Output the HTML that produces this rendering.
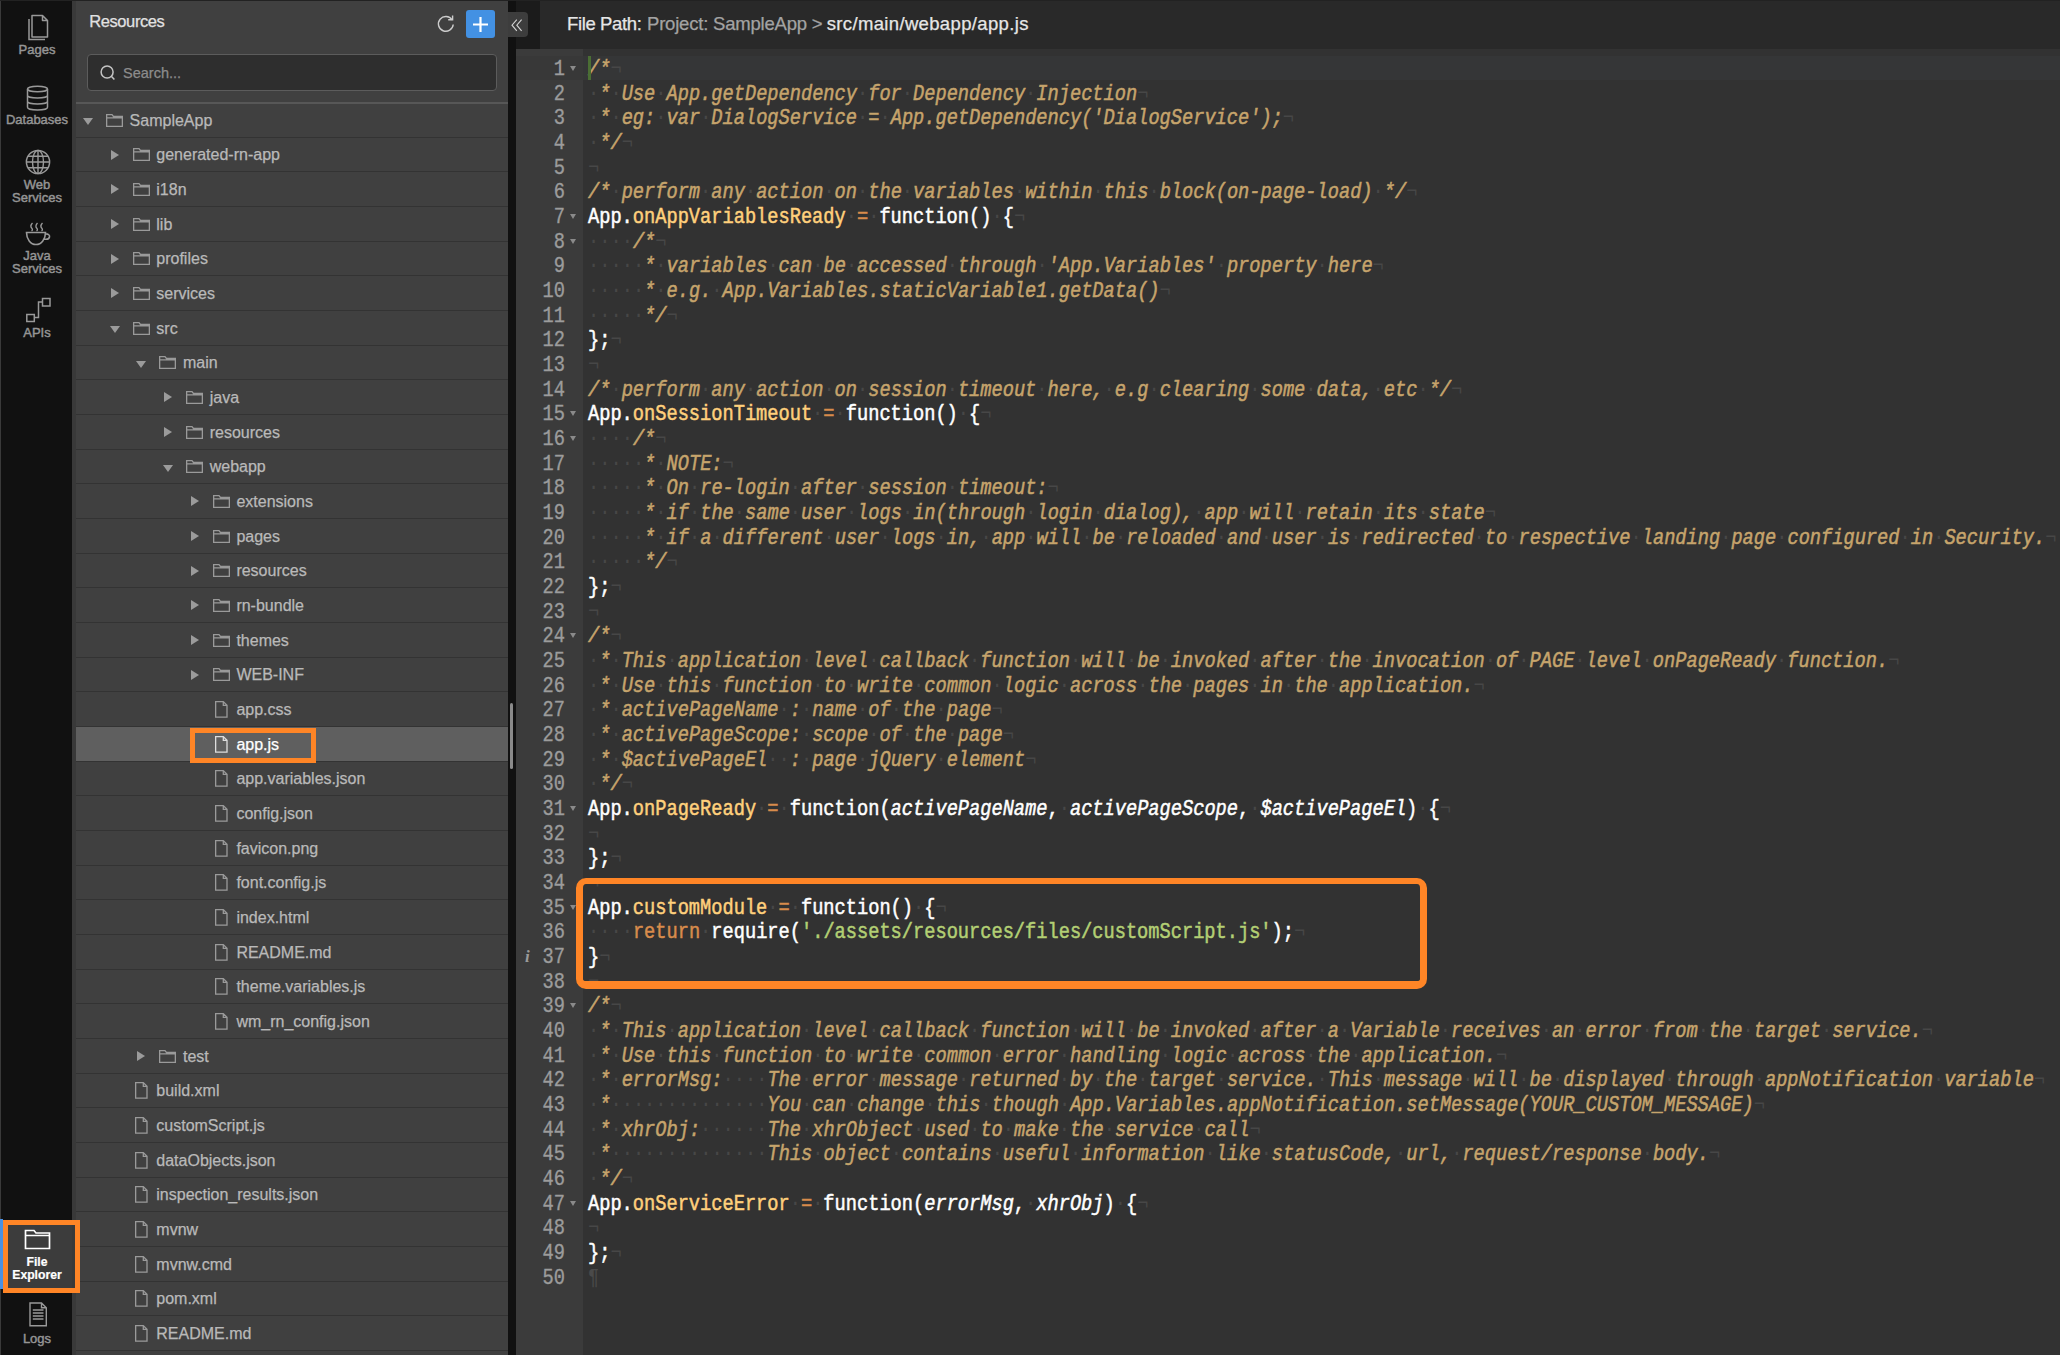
<!DOCTYPE html>
<html><head><meta charset="utf-8">
<style>
*{box-sizing:border-box}
html,body{margin:0;padding:0;width:2060px;height:1355px;overflow:hidden;background:#111;font-family:"Liberation Sans",sans-serif}
.abs{position:absolute}
#topline{position:absolute;left:0;top:0;width:2060px;height:1px;background:#222}
#side{position:absolute;left:0;top:0;width:72px;height:1355px;background:#111;border-left:1px solid #3a3a3a}
#strip{position:absolute;left:72px;top:0;width:4px;height:1355px;background:#393939}
.sb{position:absolute;left:0;width:72px;text-align:center;color:#959595;font-size:13px;line-height:13px;-webkit-text-stroke:0.45px currentColor}
.sb.act{font-weight:bold;font-size:12.2px;-webkit-text-stroke:0.2px currentColor}
#panel{position:absolute;left:76px;top:0;width:432px;height:1355px;background:#404040}
#title{position:absolute;left:13.2px;top:11.7px;font-size:16.5px;letter-spacing:-0.4px;color:#e2e2e2;-webkit-text-stroke:0.25px currentColor}
#search{position:absolute;left:11px;top:54px;width:410px;height:37px;border:1.5px solid #5c5c5c;border-radius:4px;background:#2e2e2e}
#search span{position:absolute;left:35px;top:10px;font-size:14.5px;color:#8c8c8c;-webkit-text-stroke:0.25px currentColor}
#sep{position:absolute;left:0;top:102px;width:432px;height:1.5px;background:#575757}
.row{position:absolute;left:0;width:432px;height:34.667px;border-bottom:1.5px solid #333}
.row.sel{background:#5f5f5f}
.tx{position:absolute;top:7.8px;font-size:16px;color:#b9b9b9;white-space:pre;line-height:20px;-webkit-text-stroke:0.25px currentColor}
.sel .tx{color:#fff}
.ico{position:absolute;color:#9a9a9a;line-height:0}
.sel .ico{color:#ddd}
.tdn{position:absolute;top:15px;width:0;height:0;border-left:5.3px solid transparent;border-right:5.3px solid transparent;border-top:7px solid #9b9b9b}
.trt{position:absolute;top:12px;width:0;height:0;border-top:5px solid transparent;border-bottom:5px solid transparent;border-left:8.5px solid #9b9b9b}
#scrl{position:absolute;left:508px;top:49px;width:8px;height:1306px;background:#111}
#thumb{position:absolute;left:510px;top:703px;width:3px;height:66px;background:#8a8a8a;border-radius:2px}
#hdrdark{position:absolute;left:508px;top:1px;width:32px;height:48px;background:#1b1b1b}
#hdrdark2{position:absolute;left:508px;top:1px;width:8px;height:48px;background:#111}
#hdr{position:absolute;left:540px;top:1px;width:1520px;height:48px;background:#292929}
.pth{position:absolute;top:12.3px;font-size:18.5px;color:#e6e6e6;white-space:pre;-webkit-text-stroke:0.25px currentColor}
.pth.g{color:#a3a3a3}
#collapse{position:absolute;left:508px;top:12px;width:20px;height:25px;background:#3d3d3d;border-radius:0 4px 4px 0}
#gutter{position:absolute;left:516px;top:49px;width:67px;height:1306px;background:#3b3b3b;color:#999}
#codebg{position:absolute;left:583px;top:49px;width:1477px;height:1306px;background:#323232}
#active{position:absolute;left:583px;top:55.5px;width:1477px;height:24.667px;background:#353637}
#gactive{position:absolute;left:516px;top:55.5px;width:67px;height:24.667px;background:#383838}
.ln{position:absolute;left:588px;transform:scaleY(1.18);transform-origin:0 6.67px;height:24.667px;line-height:24.667px;font-family:"Liberation Mono",monospace;font-size:18.684px;white-space:pre;color:#fff;-webkit-text-stroke:0.45px currentColor}
.gn{position:absolute;left:516px;width:49px;transform:scaleY(1.18);transform-origin:0 6.67px;text-align:right;height:24.667px;line-height:24.667px;font-family:"Liberation Mono",monospace;font-size:18.684px;color:#9c9c9c;-webkit-text-stroke:0.3px currentColor}
.fw{position:absolute;left:570px;width:0;height:0;border-left:3.5px solid transparent;border-right:3.5px solid transparent;border-top:5px solid #8a8a8a}
.ln b{font-weight:normal;font-style:normal;color:#474747;-webkit-text-stroke:0}
.ln .c{color:#C6A46C;font-style:italic}
.ln .k{color:#D88C4C}
.ln .f{color:#FFD07C}
.ln .st{color:#B3CF74}
.ln .p{font-style:italic}
.ln .pil{color:#4a4a4a}
#cursor{position:absolute;left:588px;top:55.5px;width:2.5px;height:24.667px;background:#4b6e34}
.obox{position:absolute;border-style:solid;border-color:#ff8526;border-width:6.5px 7px 8.5px 7px;border-radius:10px}
</style></head><body>
<div id="side">
  <svg class="abs" style="left:25.5px;top:14px" width="24" height="28" viewBox="0 0 24 28"><path d="M5 1.5H15.5L20.5 6.5V23H5Z M15.5 1.5V6.5H20.5" fill="none" stroke="#999" stroke-width="1.5" stroke-linejoin="round"/><path d="M2 5V25.5H18" fill="none" stroke="#999" stroke-width="1.5"/></svg>
  <div class="sb" style="top:42.5px">Pages</div>
  <svg class="abs" style="left:24.5px;top:85px" width="23" height="27" viewBox="0 0 23 27"><ellipse cx="11.5" cy="4" rx="10" ry="2.8" fill="none" stroke="#999" stroke-width="1.5"/><path d="M1.5 4V22.3C1.5 23.9 6 25.1 11.5 25.1C17 25.1 21.5 23.9 21.5 22.3V4 M1.5 10.3C1.5 11.9 6 13.1 11.5 13.1C17 13.1 21.5 11.9 21.5 10.3 M1.5 16.3C1.5 17.9 6 19.1 11.5 19.1C17 19.1 21.5 17.9 21.5 16.3" fill="none" stroke="#999" stroke-width="1.5"/></svg>
  <div class="sb" style="top:113px">Databases</div>
  <svg class="abs" style="left:23.7px;top:149px" width="26" height="26" viewBox="0 0 26 26"><circle cx="13" cy="13" r="11.6" fill="none" stroke="#999" stroke-width="1.5"/><ellipse cx="13" cy="13" rx="5.5" ry="11.6" fill="none" stroke="#999" stroke-width="1.4"/><path d="M13 1.4V24.6 M1.4 13H24.6 M3 7.2H23 M3 18.8H23" fill="none" stroke="#999" stroke-width="1.4"/></svg>
  <div class="sb" style="top:177.5px">Web<br>Services</div>
  <svg class="abs" style="left:23.5px;top:221.5px" width="26" height="24" viewBox="0 0 26 24"><path d="M7.5 1C5.5 3 5.5 5 7 6.5C7.8 7.3 7.3 8.5 6.5 9 M12.5 1C10.5 3 10.5 5 12 6.5C12.8 7.3 12.3 8.5 11.5 9 M17.5 1C15.5 3 15.5 5 17 6.5C17.8 7.3 17.3 8.5 16.5 9" fill="none" stroke="#999" stroke-width="1.4"/><path d="M1.5 10.5H20.5C20.5 17 16.5 22.5 11 22.5C5.5 22.5 1.5 17 1.5 10.5Z M20 12C23.5 11.5 25 13.5 24.5 15C24 17 21.5 17.5 19 17" fill="none" stroke="#999" stroke-width="1.6"/></svg>
  <div class="sb" style="top:248.5px">Java<br>Services</div>
  <svg class="abs" style="left:23.5px;top:297px" width="27" height="26" viewBox="0 0 27 26"><rect x="17.5" y="1.5" width="7.5" height="7.5" fill="none" stroke="#999" stroke-width="1.5"/><rect x="1.8" y="17.5" width="7.5" height="7" fill="none" stroke="#999" stroke-width="1.5"/><path d="M9.3 20.5H13.5V5H17.5" fill="none" stroke="#999" stroke-width="1.5"/></svg>
  <div class="sb" style="top:325.5px">APIs</div>
  <div class="abs" style="left:-1px;top:1219px;width:3px;height:70px;background:#4a90e2"></div>
  <div class="abs" style="left:7px;top:1222px;width:64px;height:68px;background:#3c3c3c"></div>
  <svg class="abs" style="left:23px;top:1229px" width="27" height="21" viewBox="0 0 27 21"><path d="M1.5 19.5V1.5H10L12 4H25.5V19.5Z M1.5 6.5H25.5" fill="none" stroke="#fff" stroke-width="1.7"/></svg>
  <div class="sb act" style="top:1255.5px;color:#fff">File<br>Explorer</div>
  <svg class="abs" style="left:27.7px;top:1301.5px" width="19" height="25" viewBox="0 0 19 25"><path d="M1 1H12.5L17.3 5.8V23.8H1Z M12.5 1V5.8H17.3 M3.8 8H14.5 M3.8 11H14.5 M3.8 14H14.5 M3.8 17H14.5" fill="none" stroke="#999" stroke-width="1.4"/></svg>
  <div class="sb" style="top:1332px">Logs</div>
</div>
<div id="strip"></div>
<div id="panel">
  <div id="title">Resources</div>
  <svg class="abs" style="left:360px;top:14px" width="20" height="19" viewBox="0 0 20 19"><path d="M16 5.8A7.4 7.4 0 1 0 17.2 10.5" fill="none" stroke="#ccc" stroke-width="1.4"/><path d="M12.2 5.8H16.6V1.4" fill="none" stroke="#ccc" stroke-width="1.4"/></svg>
  <div class="abs" style="left:390px;top:10px;width:29px;height:28px;background:#4391e3;border-radius:3px"></div>
  <svg class="abs" style="left:390px;top:10px" width="29" height="28" viewBox="0 0 29 28"><path d="M14.5 7V22 M7 14.5H22" stroke="#fff" stroke-width="2.2"/></svg>
  <div id="search"><svg class="abs" style="left:11px;top:9px" width="18" height="18" viewBox="0 0 18 18"><circle cx="8.1" cy="8" r="6" fill="none" stroke="#c4c4c4" stroke-width="1.5"/><path d="M12.3 12.3L15.4 15.6" stroke="#c4c4c4" stroke-width="1.5"/></svg><span>Search...</span></div>
  <div id="sep"></div>
<div class="row" style="top:103.000px"><div class="tdn" style="left:7.00px"></div><div class="ico" style="left:30.00px;top:10.8px"><svg class="fo" width="17" height="13" viewBox="0 0 17 13"><path d="M0.65 12.35V0.65H6L7.5 2.5H16.35V12.35Z M0.65 3.9H16.35" fill="none" stroke="currentColor" stroke-width="1.3"/></svg></div><div class="tx" style="left:53.60px">SampleApp</div></div>
<div class="row" style="top:137.667px"><div class="trt" style="left:34.70px"></div><div class="ico" style="left:56.70px;top:10.8px"><svg class="fo" width="17" height="13" viewBox="0 0 17 13"><path d="M0.65 12.35V0.65H6L7.5 2.5H16.35V12.35Z M0.65 3.9H16.35" fill="none" stroke="currentColor" stroke-width="1.3"/></svg></div><div class="tx" style="left:80.30px">generated-rn-app</div></div>
<div class="row" style="top:172.334px"><div class="trt" style="left:34.70px"></div><div class="ico" style="left:56.70px;top:10.8px"><svg class="fo" width="17" height="13" viewBox="0 0 17 13"><path d="M0.65 12.35V0.65H6L7.5 2.5H16.35V12.35Z M0.65 3.9H16.35" fill="none" stroke="currentColor" stroke-width="1.3"/></svg></div><div class="tx" style="left:80.30px">i18n</div></div>
<div class="row" style="top:207.001px"><div class="trt" style="left:34.70px"></div><div class="ico" style="left:56.70px;top:10.8px"><svg class="fo" width="17" height="13" viewBox="0 0 17 13"><path d="M0.65 12.35V0.65H6L7.5 2.5H16.35V12.35Z M0.65 3.9H16.35" fill="none" stroke="currentColor" stroke-width="1.3"/></svg></div><div class="tx" style="left:80.30px">lib</div></div>
<div class="row" style="top:241.668px"><div class="trt" style="left:34.70px"></div><div class="ico" style="left:56.70px;top:10.8px"><svg class="fo" width="17" height="13" viewBox="0 0 17 13"><path d="M0.65 12.35V0.65H6L7.5 2.5H16.35V12.35Z M0.65 3.9H16.35" fill="none" stroke="currentColor" stroke-width="1.3"/></svg></div><div class="tx" style="left:80.30px">profiles</div></div>
<div class="row" style="top:276.335px"><div class="trt" style="left:34.70px"></div><div class="ico" style="left:56.70px;top:10.8px"><svg class="fo" width="17" height="13" viewBox="0 0 17 13"><path d="M0.65 12.35V0.65H6L7.5 2.5H16.35V12.35Z M0.65 3.9H16.35" fill="none" stroke="currentColor" stroke-width="1.3"/></svg></div><div class="tx" style="left:80.30px">services</div></div>
<div class="row" style="top:311.002px"><div class="tdn" style="left:33.70px"></div><div class="ico" style="left:56.70px;top:10.8px"><svg class="fo" width="17" height="13" viewBox="0 0 17 13"><path d="M0.65 12.35V0.65H6L7.5 2.5H16.35V12.35Z M0.65 3.9H16.35" fill="none" stroke="currentColor" stroke-width="1.3"/></svg></div><div class="tx" style="left:80.30px">src</div></div>
<div class="row" style="top:345.669px"><div class="tdn" style="left:60.40px"></div><div class="ico" style="left:83.40px;top:10.8px"><svg class="fo" width="17" height="13" viewBox="0 0 17 13"><path d="M0.65 12.35V0.65H6L7.5 2.5H16.35V12.35Z M0.65 3.9H16.35" fill="none" stroke="currentColor" stroke-width="1.3"/></svg></div><div class="tx" style="left:107.00px">main</div></div>
<div class="row" style="top:380.336px"><div class="trt" style="left:88.10px"></div><div class="ico" style="left:110.10px;top:10.8px"><svg class="fo" width="17" height="13" viewBox="0 0 17 13"><path d="M0.65 12.35V0.65H6L7.5 2.5H16.35V12.35Z M0.65 3.9H16.35" fill="none" stroke="currentColor" stroke-width="1.3"/></svg></div><div class="tx" style="left:133.70px">java</div></div>
<div class="row" style="top:415.003px"><div class="trt" style="left:88.10px"></div><div class="ico" style="left:110.10px;top:10.8px"><svg class="fo" width="17" height="13" viewBox="0 0 17 13"><path d="M0.65 12.35V0.65H6L7.5 2.5H16.35V12.35Z M0.65 3.9H16.35" fill="none" stroke="currentColor" stroke-width="1.3"/></svg></div><div class="tx" style="left:133.70px">resources</div></div>
<div class="row" style="top:449.670px"><div class="tdn" style="left:87.10px"></div><div class="ico" style="left:110.10px;top:10.8px"><svg class="fo" width="17" height="13" viewBox="0 0 17 13"><path d="M0.65 12.35V0.65H6L7.5 2.5H16.35V12.35Z M0.65 3.9H16.35" fill="none" stroke="currentColor" stroke-width="1.3"/></svg></div><div class="tx" style="left:133.70px">webapp</div></div>
<div class="row" style="top:484.337px"><div class="trt" style="left:114.80px"></div><div class="ico" style="left:136.80px;top:10.8px"><svg class="fo" width="17" height="13" viewBox="0 0 17 13"><path d="M0.65 12.35V0.65H6L7.5 2.5H16.35V12.35Z M0.65 3.9H16.35" fill="none" stroke="currentColor" stroke-width="1.3"/></svg></div><div class="tx" style="left:160.40px">extensions</div></div>
<div class="row" style="top:519.004px"><div class="trt" style="left:114.80px"></div><div class="ico" style="left:136.80px;top:10.8px"><svg class="fo" width="17" height="13" viewBox="0 0 17 13"><path d="M0.65 12.35V0.65H6L7.5 2.5H16.35V12.35Z M0.65 3.9H16.35" fill="none" stroke="currentColor" stroke-width="1.3"/></svg></div><div class="tx" style="left:160.40px">pages</div></div>
<div class="row" style="top:553.671px"><div class="trt" style="left:114.80px"></div><div class="ico" style="left:136.80px;top:10.8px"><svg class="fo" width="17" height="13" viewBox="0 0 17 13"><path d="M0.65 12.35V0.65H6L7.5 2.5H16.35V12.35Z M0.65 3.9H16.35" fill="none" stroke="currentColor" stroke-width="1.3"/></svg></div><div class="tx" style="left:160.40px">resources</div></div>
<div class="row" style="top:588.338px"><div class="trt" style="left:114.80px"></div><div class="ico" style="left:136.80px;top:10.8px"><svg class="fo" width="17" height="13" viewBox="0 0 17 13"><path d="M0.65 12.35V0.65H6L7.5 2.5H16.35V12.35Z M0.65 3.9H16.35" fill="none" stroke="currentColor" stroke-width="1.3"/></svg></div><div class="tx" style="left:160.40px">rn-bundle</div></div>
<div class="row" style="top:623.005px"><div class="trt" style="left:114.80px"></div><div class="ico" style="left:136.80px;top:10.8px"><svg class="fo" width="17" height="13" viewBox="0 0 17 13"><path d="M0.65 12.35V0.65H6L7.5 2.5H16.35V12.35Z M0.65 3.9H16.35" fill="none" stroke="currentColor" stroke-width="1.3"/></svg></div><div class="tx" style="left:160.40px">themes</div></div>
<div class="row" style="top:657.672px"><div class="trt" style="left:114.80px"></div><div class="ico" style="left:136.80px;top:10.8px"><svg class="fo" width="17" height="13" viewBox="0 0 17 13"><path d="M0.65 12.35V0.65H6L7.5 2.5H16.35V12.35Z M0.65 3.9H16.35" fill="none" stroke="currentColor" stroke-width="1.3"/></svg></div><div class="tx" style="left:160.40px">WEB-INF</div></div>
<div class="row" style="top:692.339px"><div class="ico" style="left:139.40px;top:8.6px"><svg class="fi" width="13" height="17" viewBox="0 0 13 17"><path d="M0.65 0.65H8.3L12 4.35V16.1H0.65Z M8.3 0.65V4.35H12" fill="none" stroke="currentColor" stroke-width="1.3"/></svg></div><div class="tx" style="left:160.40px">app.css</div></div>
<div class="row sel" style="top:727.006px"><div class="ico" style="left:139.40px;top:8.6px"><svg class="fi" width="13" height="17" viewBox="0 0 13 17"><path d="M0.65 0.65H8.3L12 4.35V16.1H0.65Z M8.3 0.65V4.35H12" fill="none" stroke="currentColor" stroke-width="1.3"/></svg></div><div class="tx" style="left:160.40px">app.js</div></div>
<div class="row" style="top:761.673px"><div class="ico" style="left:139.40px;top:8.6px"><svg class="fi" width="13" height="17" viewBox="0 0 13 17"><path d="M0.65 0.65H8.3L12 4.35V16.1H0.65Z M8.3 0.65V4.35H12" fill="none" stroke="currentColor" stroke-width="1.3"/></svg></div><div class="tx" style="left:160.40px">app.variables.json</div></div>
<div class="row" style="top:796.340px"><div class="ico" style="left:139.40px;top:8.6px"><svg class="fi" width="13" height="17" viewBox="0 0 13 17"><path d="M0.65 0.65H8.3L12 4.35V16.1H0.65Z M8.3 0.65V4.35H12" fill="none" stroke="currentColor" stroke-width="1.3"/></svg></div><div class="tx" style="left:160.40px">config.json</div></div>
<div class="row" style="top:831.007px"><div class="ico" style="left:139.40px;top:8.6px"><svg class="fi" width="13" height="17" viewBox="0 0 13 17"><path d="M0.65 0.65H8.3L12 4.35V16.1H0.65Z M8.3 0.65V4.35H12" fill="none" stroke="currentColor" stroke-width="1.3"/></svg></div><div class="tx" style="left:160.40px">favicon.png</div></div>
<div class="row" style="top:865.674px"><div class="ico" style="left:139.40px;top:8.6px"><svg class="fi" width="13" height="17" viewBox="0 0 13 17"><path d="M0.65 0.65H8.3L12 4.35V16.1H0.65Z M8.3 0.65V4.35H12" fill="none" stroke="currentColor" stroke-width="1.3"/></svg></div><div class="tx" style="left:160.40px">font.config.js</div></div>
<div class="row" style="top:900.341px"><div class="ico" style="left:139.40px;top:8.6px"><svg class="fi" width="13" height="17" viewBox="0 0 13 17"><path d="M0.65 0.65H8.3L12 4.35V16.1H0.65Z M8.3 0.65V4.35H12" fill="none" stroke="currentColor" stroke-width="1.3"/></svg></div><div class="tx" style="left:160.40px">index.html</div></div>
<div class="row" style="top:935.008px"><div class="ico" style="left:139.40px;top:8.6px"><svg class="fi" width="13" height="17" viewBox="0 0 13 17"><path d="M0.65 0.65H8.3L12 4.35V16.1H0.65Z M8.3 0.65V4.35H12" fill="none" stroke="currentColor" stroke-width="1.3"/></svg></div><div class="tx" style="left:160.40px">README.md</div></div>
<div class="row" style="top:969.675px"><div class="ico" style="left:139.40px;top:8.6px"><svg class="fi" width="13" height="17" viewBox="0 0 13 17"><path d="M0.65 0.65H8.3L12 4.35V16.1H0.65Z M8.3 0.65V4.35H12" fill="none" stroke="currentColor" stroke-width="1.3"/></svg></div><div class="tx" style="left:160.40px">theme.variables.js</div></div>
<div class="row" style="top:1004.342px"><div class="ico" style="left:139.40px;top:8.6px"><svg class="fi" width="13" height="17" viewBox="0 0 13 17"><path d="M0.65 0.65H8.3L12 4.35V16.1H0.65Z M8.3 0.65V4.35H12" fill="none" stroke="currentColor" stroke-width="1.3"/></svg></div><div class="tx" style="left:160.40px">wm_rn_config.json</div></div>
<div class="row" style="top:1039.009px"><div class="trt" style="left:61.40px"></div><div class="ico" style="left:83.40px;top:10.8px"><svg class="fo" width="17" height="13" viewBox="0 0 17 13"><path d="M0.65 12.35V0.65H6L7.5 2.5H16.35V12.35Z M0.65 3.9H16.35" fill="none" stroke="currentColor" stroke-width="1.3"/></svg></div><div class="tx" style="left:107.00px">test</div></div>
<div class="row" style="top:1073.676px"><div class="ico" style="left:59.30px;top:8.6px"><svg class="fi" width="13" height="17" viewBox="0 0 13 17"><path d="M0.65 0.65H8.3L12 4.35V16.1H0.65Z M8.3 0.65V4.35H12" fill="none" stroke="currentColor" stroke-width="1.3"/></svg></div><div class="tx" style="left:80.30px">build.xml</div></div>
<div class="row" style="top:1108.343px"><div class="ico" style="left:59.30px;top:8.6px"><svg class="fi" width="13" height="17" viewBox="0 0 13 17"><path d="M0.65 0.65H8.3L12 4.35V16.1H0.65Z M8.3 0.65V4.35H12" fill="none" stroke="currentColor" stroke-width="1.3"/></svg></div><div class="tx" style="left:80.30px">customScript.js</div></div>
<div class="row" style="top:1143.010px"><div class="ico" style="left:59.30px;top:8.6px"><svg class="fi" width="13" height="17" viewBox="0 0 13 17"><path d="M0.65 0.65H8.3L12 4.35V16.1H0.65Z M8.3 0.65V4.35H12" fill="none" stroke="currentColor" stroke-width="1.3"/></svg></div><div class="tx" style="left:80.30px">dataObjects.json</div></div>
<div class="row" style="top:1177.677px"><div class="ico" style="left:59.30px;top:8.6px"><svg class="fi" width="13" height="17" viewBox="0 0 13 17"><path d="M0.65 0.65H8.3L12 4.35V16.1H0.65Z M8.3 0.65V4.35H12" fill="none" stroke="currentColor" stroke-width="1.3"/></svg></div><div class="tx" style="left:80.30px">inspection_results.json</div></div>
<div class="row" style="top:1212.344px"><div class="ico" style="left:59.30px;top:8.6px"><svg class="fi" width="13" height="17" viewBox="0 0 13 17"><path d="M0.65 0.65H8.3L12 4.35V16.1H0.65Z M8.3 0.65V4.35H12" fill="none" stroke="currentColor" stroke-width="1.3"/></svg></div><div class="tx" style="left:80.30px">mvnw</div></div>
<div class="row" style="top:1247.011px"><div class="ico" style="left:59.30px;top:8.6px"><svg class="fi" width="13" height="17" viewBox="0 0 13 17"><path d="M0.65 0.65H8.3L12 4.35V16.1H0.65Z M8.3 0.65V4.35H12" fill="none" stroke="currentColor" stroke-width="1.3"/></svg></div><div class="tx" style="left:80.30px">mvnw.cmd</div></div>
<div class="row" style="top:1281.678px"><div class="ico" style="left:59.30px;top:8.6px"><svg class="fi" width="13" height="17" viewBox="0 0 13 17"><path d="M0.65 0.65H8.3L12 4.35V16.1H0.65Z M8.3 0.65V4.35H12" fill="none" stroke="currentColor" stroke-width="1.3"/></svg></div><div class="tx" style="left:80.30px">pom.xml</div></div>
<div class="row" style="top:1316.345px"><div class="ico" style="left:59.30px;top:8.6px"><svg class="fi" width="13" height="17" viewBox="0 0 13 17"><path d="M0.65 0.65H8.3L12 4.35V16.1H0.65Z M8.3 0.65V4.35H12" fill="none" stroke="currentColor" stroke-width="1.3"/></svg></div><div class="tx" style="left:80.30px">README.md</div></div>
  <div class="abs" style="left:114px;top:728px;width:126px;height:35px;border:5px solid #ff8526"></div>
</div>
<div id="topline"></div>
<div id="scrl"></div>
<div id="thumb"></div>
<div id="hdrdark"></div>
<div id="hdrdark2"></div>
<div id="hdr"><div class="pth" style="left:27px;letter-spacing:-0.37px">File Path:</div><div class="pth g" style="left:107px;letter-spacing:-0.2px">Project: SampleApp &gt;</div><div class="pth" style="left:286.7px;letter-spacing:0.35px">src/main/webapp/app.js</div></div>
<div id="collapse"><svg class="abs" style="left:2.7px;top:6.5px" width="12" height="13" viewBox="0 0 12 13"><path d="M5.8 0.6L1 6.2L5.8 11.8 M10.6 0.6L5.8 6.2L10.6 11.8" fill="none" stroke="#d4d4d4" stroke-width="1.1"/></svg></div>
<div id="gutter"></div>
<div id="codebg"></div>
<div id="gactive"></div>
<div id="active"></div>
<div class="gn" style="top:56.000px">1</div><div class="fw" style="top:65.834px"></div>
<div class="gn" style="top:80.667px">2</div>
<div class="gn" style="top:105.334px">3</div>
<div class="gn" style="top:130.001px">4</div>
<div class="gn" style="top:154.668px">5</div>
<div class="gn" style="top:179.335px">6</div>
<div class="gn" style="top:204.002px">7</div><div class="fw" style="top:213.836px"></div>
<div class="gn" style="top:228.669px">8</div><div class="fw" style="top:238.502px"></div>
<div class="gn" style="top:253.336px">9</div>
<div class="gn" style="top:278.003px">10</div>
<div class="gn" style="top:302.670px">11</div>
<div class="gn" style="top:327.337px">12</div>
<div class="gn" style="top:352.004px">13</div>
<div class="gn" style="top:376.671px">14</div>
<div class="gn" style="top:401.338px">15</div><div class="fw" style="top:411.172px"></div>
<div class="gn" style="top:426.005px">16</div><div class="fw" style="top:435.839px"></div>
<div class="gn" style="top:450.672px">17</div>
<div class="gn" style="top:475.339px">18</div>
<div class="gn" style="top:500.006px">19</div>
<div class="gn" style="top:524.673px">20</div>
<div class="gn" style="top:549.340px">21</div>
<div class="gn" style="top:574.007px">22</div>
<div class="gn" style="top:598.674px">23</div>
<div class="gn" style="top:623.341px">24</div><div class="fw" style="top:633.174px"></div>
<div class="gn" style="top:648.008px">25</div>
<div class="gn" style="top:672.675px">26</div>
<div class="gn" style="top:697.342px">27</div>
<div class="gn" style="top:722.009px">28</div>
<div class="gn" style="top:746.676px">29</div>
<div class="gn" style="top:771.343px">30</div>
<div class="gn" style="top:796.010px">31</div><div class="fw" style="top:805.843px"></div>
<div class="gn" style="top:820.677px">32</div>
<div class="gn" style="top:845.344px">33</div>
<div class="gn" style="top:870.011px">34</div>
<div class="gn" style="top:894.678px">35</div><div class="fw" style="top:904.512px"></div>
<div class="gn" style="top:919.345px">36</div>
<div class="gn" style="top:944.012px">37</div>
<div class="gn" style="top:968.679px">38</div>
<div class="gn" style="top:993.346px">39</div><div class="fw" style="top:1003.179px"></div>
<div class="gn" style="top:1018.013px">40</div>
<div class="gn" style="top:1042.680px">41</div>
<div class="gn" style="top:1067.347px">42</div>
<div class="gn" style="top:1092.014px">43</div>
<div class="gn" style="top:1116.681px">44</div>
<div class="gn" style="top:1141.348px">45</div>
<div class="gn" style="top:1166.015px">46</div>
<div class="gn" style="top:1190.682px">47</div><div class="fw" style="top:1200.515px"></div>
<div class="gn" style="top:1215.349px">48</div>
<div class="gn" style="top:1240.016px">49</div>
<div class="gn" style="top:1264.683px">50</div>
<div class="abs" style="left:525px;top:947px;font-family:'Liberation Serif',serif;font-style:italic;font-weight:bold;font-size:17px;color:#9a9a9a">i</div>
<div class="ln" style="top:56.000px"><span class="c">/*</span><b>¬</b></div>
<div class="ln" style="top:80.667px"><span class="c"><b>·</b>*<b>·</b>Use<b>·</b>App.getDependency<b>·</b>for<b>·</b>Dependency<b>·</b>Injection</span><b>¬</b></div>
<div class="ln" style="top:105.334px"><span class="c"><b>·</b>*<b>·</b>eg:<b>·</b>var<b>·</b>DialogService<b>·</b>=<b>·</b>App.getDependency(&#x27;DialogService&#x27;);</span><b>¬</b></div>
<div class="ln" style="top:130.001px"><span class="c"><b>·</b>*/</span><b>¬</b></div>
<div class="ln" style="top:154.668px"><b>¬</b></div>
<div class="ln" style="top:179.335px"><span class="c">/*<b>·</b>perform<b>·</b>any<b>·</b>action<b>·</b>on<b>·</b>the<b>·</b>variables<b>·</b>within<b>·</b>this<b>·</b>block(on-page-load)<b>·</b>*/</span><b>¬</b></div>
<div class="ln" style="top:204.002px"><span class="n">App.</span><span class="f">onAppVariablesReady</span><span class="n"><b>·</b></span><span class="k">=</span><span class="n"><b>·</b>function()<b>·</b>{</span><b>¬</b></div>
<div class="ln" style="top:228.669px"><span class="n"><b>·</b><b>·</b><b>·</b><b>·</b></span><span class="c">/*</span><b>¬</b></div>
<div class="ln" style="top:253.336px"><span class="n"><b>·</b><b>·</b><b>·</b><b>·</b><b>·</b></span><span class="c">*<b>·</b>variables<b>·</b>can<b>·</b>be<b>·</b>accessed<b>·</b>through<b>·</b>&#x27;App.Variables&#x27;<b>·</b>property<b>·</b>here</span><b>¬</b></div>
<div class="ln" style="top:278.003px"><span class="n"><b>·</b><b>·</b><b>·</b><b>·</b><b>·</b></span><span class="c">*<b>·</b>e.g.<b>·</b>App.Variables.staticVariable1.getData()</span><b>¬</b></div>
<div class="ln" style="top:302.670px"><span class="n"><b>·</b><b>·</b><b>·</b><b>·</b><b>·</b></span><span class="c">*/</span><b>¬</b></div>
<div class="ln" style="top:327.337px"><span class="n">};</span><b>¬</b></div>
<div class="ln" style="top:352.004px"><b>¬</b></div>
<div class="ln" style="top:376.671px"><span class="c">/*<b>·</b>perform<b>·</b>any<b>·</b>action<b>·</b>on<b>·</b>session<b>·</b>timeout<b>·</b>here,<b>·</b>e.g<b>·</b>clearing<b>·</b>some<b>·</b>data,<b>·</b>etc<b>·</b>*/</span><b>¬</b></div>
<div class="ln" style="top:401.338px"><span class="n">App.</span><span class="f">onSessionTimeout</span><span class="n"><b>·</b></span><span class="k">=</span><span class="n"><b>·</b>function()<b>·</b>{</span><b>¬</b></div>
<div class="ln" style="top:426.005px"><span class="n"><b>·</b><b>·</b><b>·</b><b>·</b></span><span class="c">/*</span><b>¬</b></div>
<div class="ln" style="top:450.672px"><span class="n"><b>·</b><b>·</b><b>·</b><b>·</b><b>·</b></span><span class="c">*<b>·</b>NOTE:</span><b>¬</b></div>
<div class="ln" style="top:475.339px"><span class="n"><b>·</b><b>·</b><b>·</b><b>·</b><b>·</b></span><span class="c">*<b>·</b>On<b>·</b>re-login<b>·</b>after<b>·</b>session<b>·</b>timeout:</span><b>¬</b></div>
<div class="ln" style="top:500.006px"><span class="n"><b>·</b><b>·</b><b>·</b><b>·</b><b>·</b></span><span class="c">*<b>·</b>if<b>·</b>the<b>·</b>same<b>·</b>user<b>·</b>logs<b>·</b>in(through<b>·</b>login<b>·</b>dialog),<b>·</b>app<b>·</b>will<b>·</b>retain<b>·</b>its<b>·</b>state</span><b>¬</b></div>
<div class="ln" style="top:524.673px"><span class="n"><b>·</b><b>·</b><b>·</b><b>·</b><b>·</b></span><span class="c">*<b>·</b>if<b>·</b>a<b>·</b>different<b>·</b>user<b>·</b>logs<b>·</b>in,<b>·</b>app<b>·</b>will<b>·</b>be<b>·</b>reloaded<b>·</b>and<b>·</b>user<b>·</b>is<b>·</b>redirected<b>·</b>to<b>·</b>respective<b>·</b>landing<b>·</b>page<b>·</b>configured<b>·</b>in<b>·</b>Security.</span><b>¬</b></div>
<div class="ln" style="top:549.340px"><span class="n"><b>·</b><b>·</b><b>·</b><b>·</b><b>·</b></span><span class="c">*/</span><b>¬</b></div>
<div class="ln" style="top:574.007px"><span class="n">};</span><b>¬</b></div>
<div class="ln" style="top:598.674px"><b>¬</b></div>
<div class="ln" style="top:623.341px"><span class="c">/*</span><b>¬</b></div>
<div class="ln" style="top:648.008px"><span class="c"><b>·</b>*<b>·</b>This<b>·</b>application<b>·</b>level<b>·</b>callback<b>·</b>function<b>·</b>will<b>·</b>be<b>·</b>invoked<b>·</b>after<b>·</b>the<b>·</b>invocation<b>·</b>of<b>·</b>PAGE<b>·</b>level<b>·</b>onPageReady<b>·</b>function.</span><b>¬</b></div>
<div class="ln" style="top:672.675px"><span class="c"><b>·</b>*<b>·</b>Use<b>·</b>this<b>·</b>function<b>·</b>to<b>·</b>write<b>·</b>common<b>·</b>logic<b>·</b>across<b>·</b>the<b>·</b>pages<b>·</b>in<b>·</b>the<b>·</b>application.</span><b>¬</b></div>
<div class="ln" style="top:697.342px"><span class="c"><b>·</b>*<b>·</b>activePageName<b>·</b>:<b>·</b>name<b>·</b>of<b>·</b>the<b>·</b>page</span><b>¬</b></div>
<div class="ln" style="top:722.009px"><span class="c"><b>·</b>*<b>·</b>activePageScope:<b>·</b>scope<b>·</b>of<b>·</b>the<b>·</b>page</span><b>¬</b></div>
<div class="ln" style="top:746.676px"><span class="c"><b>·</b>*<b>·</b>$activePageEl<b>·</b><b>·</b>:<b>·</b>page<b>·</b>jQuery<b>·</b>element</span><b>¬</b></div>
<div class="ln" style="top:771.343px"><span class="c"><b>·</b>*/</span><b>¬</b></div>
<div class="ln" style="top:796.010px"><span class="n">App.</span><span class="f">onPageReady</span><span class="n"><b>·</b></span><span class="k">=</span><span class="n"><b>·</b>function(</span><span class="p">activePageName</span><span class="n">,<b>·</b></span><span class="p">activePageScope</span><span class="n">,<b>·</b></span><span class="p">$activePageEl</span><span class="n">)<b>·</b>{</span><b>¬</b></div>
<div class="ln" style="top:820.677px"><b>¬</b></div>
<div class="ln" style="top:845.344px"><span class="n">};</span><b>¬</b></div>
<div class="ln" style="top:870.011px"><b>¬</b></div>
<div class="ln" style="top:894.678px"><span class="n">App.</span><span class="f">customModule</span><span class="n"><b>·</b></span><span class="k">=</span><span class="n"><b>·</b>function()<b>·</b>{</span><b>¬</b></div>
<div class="ln" style="top:919.345px"><span class="n"><b>·</b><b>·</b><b>·</b><b>·</b></span><span class="k">return</span><span class="n"><b>·</b>require(</span><span class="st">&#x27;./assets/resources/files/customScript.js&#x27;</span><span class="n">);</span><b>¬</b></div>
<div class="ln" style="top:944.012px"><span class="n">}</span><b>¬</b></div>
<div class="ln" style="top:968.679px"><b>¬</b></div>
<div class="ln" style="top:993.346px"><span class="c">/*</span><b>¬</b></div>
<div class="ln" style="top:1018.013px"><span class="c"><b>·</b>*<b>·</b>This<b>·</b>application<b>·</b>level<b>·</b>callback<b>·</b>function<b>·</b>will<b>·</b>be<b>·</b>invoked<b>·</b>after<b>·</b>a<b>·</b>Variable<b>·</b>receives<b>·</b>an<b>·</b>error<b>·</b>from<b>·</b>the<b>·</b>target<b>·</b>service.</span><b>¬</b></div>
<div class="ln" style="top:1042.680px"><span class="c"><b>·</b>*<b>·</b>Use<b>·</b>this<b>·</b>function<b>·</b>to<b>·</b>write<b>·</b>common<b>·</b>error<b>·</b>handling<b>·</b>logic<b>·</b>across<b>·</b>the<b>·</b>application.</span><b>¬</b></div>
<div class="ln" style="top:1067.347px"><span class="c"><b>·</b>*<b>·</b>errorMsg:<b>·</b><b>·</b><b>·</b><b>·</b>The<b>·</b>error<b>·</b>message<b>·</b>returned<b>·</b>by<b>·</b>the<b>·</b>target<b>·</b>service.<b>·</b>This<b>·</b>message<b>·</b>will<b>·</b>be<b>·</b>displayed<b>·</b>through<b>·</b>appNotification<b>·</b>variable</span><b>¬</b></div>
<div class="ln" style="top:1092.014px"><span class="c"><b>·</b>*<b>·</b><b>·</b><b>·</b><b>·</b><b>·</b><b>·</b><b>·</b><b>·</b><b>·</b><b>·</b><b>·</b><b>·</b><b>·</b><b>·</b>You<b>·</b>can<b>·</b>change<b>·</b>this<b>·</b>though<b>·</b>App.Variables.appNotification.setMessage(YOUR_CUSTOM_MESSAGE)</span><b>¬</b></div>
<div class="ln" style="top:1116.681px"><span class="c"><b>·</b>*<b>·</b>xhrObj:<b>·</b><b>·</b><b>·</b><b>·</b><b>·</b><b>·</b>The<b>·</b>xhrObject<b>·</b>used<b>·</b>to<b>·</b>make<b>·</b>the<b>·</b>service<b>·</b>call</span><b>¬</b></div>
<div class="ln" style="top:1141.348px"><span class="c"><b>·</b>*<b>·</b><b>·</b><b>·</b><b>·</b><b>·</b><b>·</b><b>·</b><b>·</b><b>·</b><b>·</b><b>·</b><b>·</b><b>·</b><b>·</b>This<b>·</b>object<b>·</b>contains<b>·</b>useful<b>·</b>information<b>·</b>like<b>·</b>statusCode,<b>·</b>url,<b>·</b>request/response<b>·</b>body.</span><b>¬</b></div>
<div class="ln" style="top:1166.015px"><span class="c"><b>·</b>*/</span><b>¬</b></div>
<div class="ln" style="top:1190.682px"><span class="n">App.</span><span class="f">onServiceError</span><span class="n"><b>·</b></span><span class="k">=</span><span class="n"><b>·</b>function(</span><span class="p">errorMsg</span><span class="n">,<b>·</b></span><span class="p">xhrObj</span><span class="n">)<b>·</b>{</span><b>¬</b></div>
<div class="ln" style="top:1215.349px"><b>¬</b></div>
<div class="ln" style="top:1240.016px"><span class="n">};</span><b>¬</b></div>
<div class="ln" style="top:1264.683px"><b class="pil">¶</b></div>
<div id="cursor"></div>
<div class="abs" style="left:3px;top:1220px;width:77px;height:73px;border:5px solid #ff8526"></div>
<div class="obox" style="left:576px;top:878px;width:851px;height:111px"></div>
</body></html>
